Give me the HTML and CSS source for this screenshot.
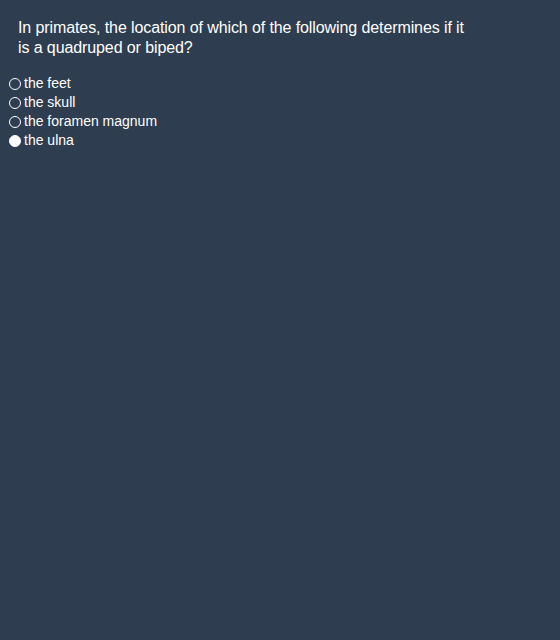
FILE: index.html
```html
<!DOCTYPE html>
<html>
<head>
<meta charset="utf-8">
<link rel="stylesheet" href="styles.css">
</head>
<body>
<div class="question">In primates, the location of which of the following determines if it is a quadruped or biped?</div>
<ul class="options">
  <li class="option"><span class="radio"></span>the feet</li>
  <li class="option"><span class="radio"></span>the skull</li>
  <li class="option"><span class="radio"></span>the foramen magnum</li>
  <li class="option"><span class="radio checked"></span>the ulna</li>
</ul>
</body>
</html>
```
FILE: styles.css
```css
html, body {
  margin: 0;
  padding: 0;
  background: #2e3d50;
  height: 100%;
}
body {
  font-family: "Liberation Sans", Arial, sans-serif;
  color: #ffffff;
}
.question {
  font-size: 16px;
  letter-spacing: -0.1px;
  line-height: 20px;
  padding: 18px 18px 0 18px;
  width: 450px;
}
.options {
  list-style: none;
  margin: 0;
  padding: 16px 0 0 8px;
}
.option {
  display: flex;
  align-items: center;
  font-size: 14px;
  line-height: 19px;
  height: 19px;
}
.radio {
  box-sizing: border-box;
  width: 12px;
  height: 12px;
  border: 1px solid #ffffff;
  border-radius: 50%;
  margin-right: 3px;
  margin-left: 1px;
}
.radio.checked {
  background: #ffffff;
}
```
